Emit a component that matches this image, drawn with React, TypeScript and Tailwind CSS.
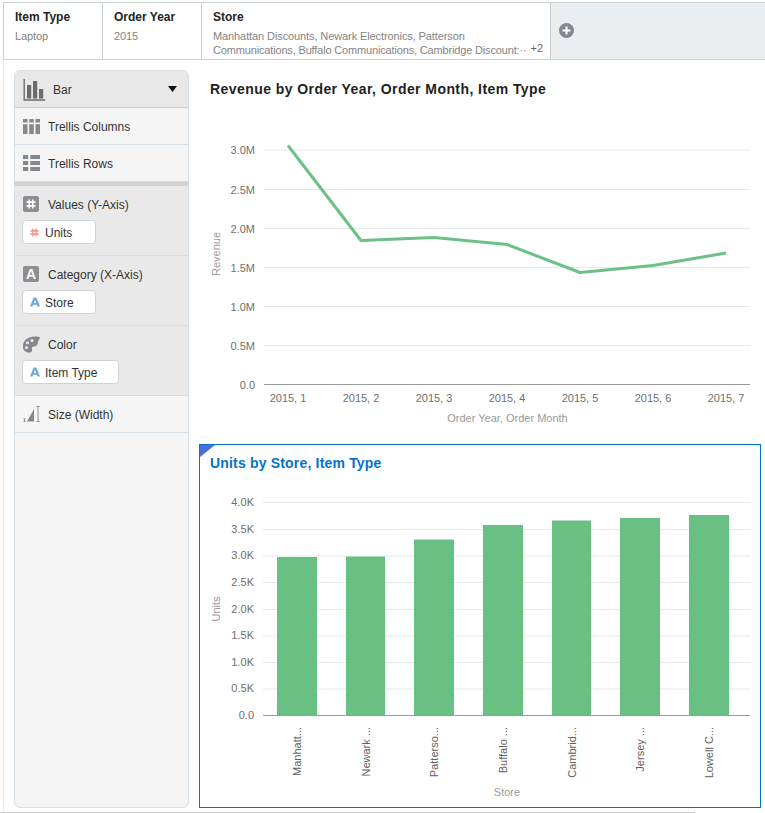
const FONT = "[font-family:'Liberation_Sans',Arial,sans-serif]";

function Cell({ title, value, w }: { title: string; value: string; w: string }) {
  return (
    <div className={`${w} shrink-0 border-r border-[#c8d0d8] bg-white pt-[7px] pl-[11px]`}>
      <div className="text-[12px] leading-[14px] font-bold text-[#252525]">{title}</div>
      <div className="mt-[5px] text-[11px] leading-[14px] tracking-[-0.1px] text-[#848484]">{value}</div>
    </div>
  );
}

function SqIcon({ children }: { children: React.ReactNode }) {
  return (
    <span className="flex h-[16px] w-[16px] shrink-0 items-center justify-center rounded-[2px] bg-[#8b8e92] text-[14px] leading-none font-bold text-white">
      {children}
    </span>
  );
}

function HashSvg({ color, size = 10 }: { color: string; size?: number }) {
  return (
    <svg width={size} height={size} viewBox="0 0 10 10" className="shrink-0">
      <path d="M3.2 0.5v9M6.8 0.5v9M0.5 3.2h9M0.5 6.8h9" stroke={color} strokeWidth="1.7" fill="none" />
    </svg>
  );
}

function ASvg() {
  return (
    <svg width="10" height="10" viewBox="0 0 11 10" className="shrink-0">
      <path fillRule="evenodd" d="M4 0h3l4 10H8.3l-.7-2H3.4l-.7 2H0zM5.5 2.6 4.2 6h2.6z" fill="#6fa8d6" />
    </svg>
  );
}

function Pill({ w, icon, label }: { w: string; icon: React.ReactNode; label: string }) {
  return (
    <div className={`${w} mt-[8px] ml-[7px] flex h-[24px] items-center rounded-[4px] border border-[#cfd3d6] bg-white pl-[7px] text-[12px] text-[#333]`}>
      <span className="flex w-[15px] shrink-0 items-center">{icon}</span>
      <span className="pt-[1px]">{label}</span>
    </div>
  );
}

function Row({ icon, label }: { icon: React.ReactNode; label: string }) {
  return (
    <div className="flex h-[37px] items-center border-b border-[#d6dfe6] bg-[#f5f5f5] pl-[8px] text-[12px] text-[#333]">
      <span className="flex w-[25px] shrink-0 items-center">{icon}</span>
      <span className="pt-[2px]">{label}</span>
    </div>
  );
}

function Section({ icon, label, children }: { icon: React.ReactNode; label: string; children: React.ReactNode }) {
  return (
    <div className="h-[70px] border-b border-[#d6dfe6] bg-[#e9e9e9] pt-[10px]">
      <div className="flex h-[16px] items-center pl-[8px] text-[12px] text-[#333]">
        <span className="flex w-[25px] shrink-0 items-center">{icon}</span>
        <span className="pt-[2px]">{label}</span>
      </div>
      {children}
    </div>
  );
}

function Sidebar() {
  return (
    <aside className="mt-[10px] ml-[10px] flex h-[738px] w-[175px] shrink-0 flex-col overflow-hidden rounded-[6px] border border-[#d6dfe6] bg-[#f5f5f5]">
      <div className="flex h-[37px] items-center border-b border-[#cfcfcf] bg-[#e8e8e8] pl-[8px] text-[12px] text-[#333]">
        <svg width="24" height="24" viewBox="0 0 24 24" className="shrink-0">
          <path d="M1.2 2v21h21" stroke="#6b6b6b" strokeWidth="1.4" fill="none" />
          <path d="M4 8h4.2v13.5H4zM10 4h4.2v17.5H10zM16 12h4.2v9.5H16z" fill="#6b6b6b" />
        </svg>
        <span className="ml-[6px] pt-[2px]">Bar</span>
        <svg width="9" height="6" viewBox="0 0 11 8" preserveAspectRatio="none" className="mr-[11px] ml-auto">
          <path d="M0 0h11L5.5 8z" fill="#111" />
        </svg>
      </div>
      <Row
        label="Trellis Columns"
        icon={
          <svg width="17" height="15" viewBox="0 0 17 15">
            <path d="M0 0h4.5v3.5H0zM6.2 0h4.6v3.5H6.2zM12.5 0H17v3.5h-4.5zM0 5.2h4.5V15H0zM6.2 5.2h4.6V15H6.2zM12.5 5.2H17V15h-4.5z" fill="#85888c" />
          </svg>
        }
      />
      <Row
        label="Trellis Rows"
        icon={
          <svg width="17" height="16" viewBox="0 0 17 16">
            <path d="M0 0h5.2v4H0zM7.3 0H17v4H7.3zM0 6h5.2v4H0zM7.3 6H17v4H7.3zM0 12h5.2v4H0zM7.3 12H17v4H7.3z" fill="#85888c" />
          </svg>
        }
      />
      <div className="h-[4px] shrink-0 bg-[#d2d2d2]" />
      <Section label="Values (Y-Axis)" icon={<SqIcon><HashSvg color="#fff" /></SqIcon>}>
        <Pill w="w-[74px]" icon={<HashSvg color="#f39a94" size={9} />} label="Units" />
      </Section>
      <Section label="Category (X-Axis)" icon={<SqIcon>A</SqIcon>}>
        <Pill w="w-[74px]" icon={<ASvg />} label="Store" />
      </Section>
      <Section
        label="Color"
        icon={
          <svg width="18" height="17" viewBox="0 0 18 17">
            <path
              fillRule="evenodd"
              d="M17.5 1.5C15 0 10.5 0 6.5 1.5 2 3.2-.5 7-.2 11c.3 3.8 4 6 7.2 5.5 2.2-.4 2.4-2 2-3.2-.5-1.5.4-2.7 2-2.8 2.5-.2 3.6-1.5 3.8-3.5.2-2 1-3.5 2.7-5.5zM9 3a1.6 1.6 0 1 1 0 3.2A1.6 1.6 0 0 1 9 3zM4.5 5.2a1.6 1.6 0 1 1 0 3.2 1.6 1.6 0 0 1 0-3.2zM3.5 10a1.6 1.6 0 1 1 0 3.2 1.6 1.6 0 0 1 0-3.2z"
              fill="#85888c"
            />
          </svg>
        }
      >
        <Pill w="w-[97px]" icon={<ASvg />} label="Item Type" />
      </Section>
      <Row
        label="Size (Width)"
        icon={
          <svg width="17" height="16" viewBox="0 0 17 16">
            <path d="M4 15.5 11 3v12.5z" fill="#85888c" />
            <path d="M13.5.5h3M15 .5v15M13.5 15.5h3M.5 12.8h2M1.5 12.8v2.7M.5 15.5h2" stroke="#85888c" strokeWidth="0.9" fill="none" />
          </svg>
        }
      />
    </aside>
  );
}

const AXIS_TEXT = "#6f6f6f";
const TITLE_TEXT = "#9a9a9a";
const GRID = "#e6e8ec";

function LineChart() {
  const ox = 199;
  const oy = 100;
  const ticks: [string, number][] = [
    ["3.0M", 150], ["2.5M", 189.5], ["2.0M", 228.5], ["1.5M", 267.5], ["1.0M", 306.5], ["0.5M", 345.5], ["0.0", 384.5],
  ];
  const cats: [string, number][] = [
    ["2015, 1", 288], ["2015, 2", 361], ["2015, 3", 434], ["2015, 4", 507], ["2015, 5", 580], ["2015, 6", 653], ["2015, 7", 726],
  ];
  const pts = [[288, 145.5], [361, 240.5], [434, 237.5], [507, 244.5], [580, 272.5], [653, 265.5], [726, 253]];
  return (
    <svg width="562" height="334" viewBox={`${ox} ${oy} 562 334`} className="block">
      {ticks.map(([l, y], i) => (
        <g key={l}>
          <line x1="264" x2="750" y1={y} y2={y} stroke={i === 6 ? "#9b9b9b" : GRID} strokeWidth="1" />
          <text x="255" y={y + 4} textAnchor="end" fontSize="11" fill={AXIS_TEXT}>{l}</text>
        </g>
      ))}
      {cats.map(([l, x]) => (
        <text key={l} x={x} y="402" textAnchor="middle" fontSize="11" fill={AXIS_TEXT}>{l}</text>
      ))}
      <polyline points={pts.map((p) => p.join(",")).join(" ")} fill="none" stroke="#6cc186" strokeWidth="3" strokeLinejoin="round" />
      <text x="507.5" y="422" textAnchor="middle" fontSize="11" fill={TITLE_TEXT}>Order Year, Order Month</text>
      <text transform="translate(220,254) rotate(-90)" textAnchor="middle" fontSize="11" fill={TITLE_TEXT}>Revenue</text>
    </svg>
  );
}

function BarChart() {
  const ox = 200;
  const oy = 480;
  const ticks: [string, number][] = [
    ["4.0K", 502.5], ["3.5K", 529.5], ["3.0K", 556], ["2.5K", 582.5], ["2.0K", 609.5], ["1.5K", 636], ["1.0K", 662.5], ["0.5K", 689], ["0.0", 715.5],
  ];
  const bars: [string, number, number, number][] = [
    ["Manhatt...", 277, 40, 557],
    ["Newark ...", 346, 39, 556.5],
    ["Patterso...", 414, 40, 539.5],
    ["Buffalo ...", 483, 40, 525],
    ["Cambrid...", 552, 39, 520.5],
    ["Jersey ...", 620, 40, 518],
    ["Lowell C...", 689, 40, 515],
  ];
  return (
    <svg width="560" height="327" viewBox={`${ox} ${oy} 560 327`} className="block">
      {ticks.slice(0, 8).map(([l, y]) => (
        <line key={l} x1="263" x2="750" y1={y} y2={y} stroke={GRID} strokeWidth="1" />
      ))}
      {bars.map(([l, x, w, top]) => (
        <g key={l}>
          <rect x={x} y={top} width={w} height={715 - top} fill="#68c182" />
          <text transform={`translate(${x + w / 2 + 4},727) rotate(-90)`} textAnchor="end" fontSize="11" fill="#5f5f5f">{l}</text>
        </g>
      ))}
      <line x1="263" x2="750" y1="715.5" y2="715.5" stroke="#9b9b9b" strokeWidth="1" />
      {ticks.map(([l, y]) => (
        <text key={l} x="254" y={y + 3} textAnchor="end" fontSize="11" fill={AXIS_TEXT}>{l}</text>
      ))}
      <text x="507" y="796" textAnchor="middle" fontSize="11" fill={TITLE_TEXT}>Store</text>
      <text transform="translate(220,609) rotate(-90)" textAnchor="middle" fontSize="11" fill={TITLE_TEXT}>Units</text>
    </svg>
  );
}

export default function App() {
  return (
    <div className={`${FONT} relative h-[813px] w-[765px] overflow-hidden bg-white`}>
      <div className="mt-[2px] ml-[3px] box-border flex h-[58px] border-y border-l border-[#c8d0d8] bg-[#ebeef1]">
        <Cell title="Item Type" value="Laptop" w="w-[99px]" />
        <Cell title="Order Year" value="2015" w="w-[99px]" />
        <div className="relative w-[349px] shrink-0 border-r border-[#c8d0d8] bg-white pt-[7px] pl-[11px]">
          <div className="text-[12px] leading-[14px] font-bold text-[#252525]">Store</div>
          <div className="mt-[5px] text-[11px] leading-[14px] tracking-[-0.1px] text-[#848484]">
            <div className="whitespace-nowrap">Manhattan Discounts, Newark Electronics, Patterson</div>
            <div className="whitespace-nowrap tracking-[-0.16px]">Communications, Buffalo Communications, Cambridge Discount:··</div>
          </div>
          <span className="absolute right-[7px] bottom-[4px] text-[11px] leading-[14px] text-[#666]">+2</span>
        </div>
        <div className="flex items-center pb-[2px] pl-[8px]">
          <svg width="15" height="15" viewBox="0 0 15 15">
            <circle cx="7.5" cy="7.5" r="7.5" fill="#85888c" />
            <path d="M7.5 3.5v8M3.5 7.5h8" stroke="#fff" strokeWidth="2" />
          </svg>
        </div>
      </div>

      <div className="ml-[3px] flex h-[753px] border-l border-[#e6ecf0]">
        <Sidebar />
        <main className="ml-[10px] w-[562px] shrink-0">
          <h2 className="mt-[21px] pl-[11px] text-[14px] leading-[16px] font-bold tracking-[0.43px] text-[#1f1f1f]">
            Revenue by Order Year, Order Month, Item Type
          </h2>
          <div className="mt-[3px]">
            <LineChart />
          </div>
          <section className="relative mt-[10px] h-[364px] w-[562px] border border-[#0572ce]">
            <svg width="16" height="12" viewBox="0 0 16 12" className="absolute top-0 left-0">
              <path d="M0 0h15L0 12z" fill="#4a6fd8" />
            </svg>
            <h2 className="pt-[10px] pl-[10px] text-[14px] leading-[16px] font-bold tracking-[0.18px] text-[#0572ce]">
              Units by Store, Item Type
            </h2>
            <div className="mt-[9px]">
              <BarChart />
            </div>
          </section>
        </main>
      </div>
      <div className="absolute bottom-0 left-0 h-[1px] w-[695px] bg-[#cfcfcf]" />
    </div>
  );
}
